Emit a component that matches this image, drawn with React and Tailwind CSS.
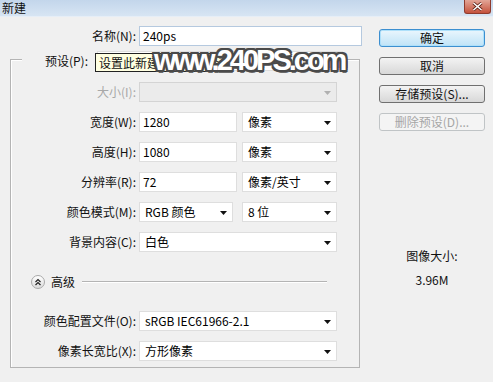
import React from "react";

const FONT = "font-['Noto_Sans_CJK_SC','Microsoft_YaHei',sans-serif]";

function Arrow({ disabled }) {
  return (
    <svg width="7" height="4" viewBox="0 0 7 4" className="absolute right-[5px] top-[8px]">
      <polygon points="0,0 7,0 3.5,4" fill={disabled ? "#b0b0b0" : "#111"} />
    </svg>
  );
}

function Select({ w, children, disabled }) {
  return (
    <div
      className={
        "relative h-[20px] border flex items-center pl-[5px] text-[12px] leading-[18px] " +
        w +
        (disabled ? " bg-[#ebebeb] border-[#d4d4d4]" : " bg-white border-[#dedede]")
      }
    >
      <span className="whitespace-nowrap">{children}</span>
      <Arrow disabled={disabled} />
    </div>
  );
}

function Input({ w, children }) {
  return (
    <div className={"h-[20px] border border-[#dedede] bg-white flex items-center pl-[3px] text-[12px] " + w}>
      {children}
    </div>
  );
}

function Row({ label, disabled, children, className, gap }) {
  return (
    <div className={"flex items-center h-[20px] " + (className || "")}>
      <div
        className={
          "w-[125px] text-right text-[12px] whitespace-nowrap " +
          (disabled ? "text-[#a8a8a8]" : "text-[#111]")
        }
      >
        {label}
      </div>
      <div className={"ml-[3px] flex " + (gap || "gap-[5px]")}>{children}</div>
    </div>
  );
}

function Btn({ children, primary, disabled }) {
  let cls =
    "h-[18px] w-[106px] rounded-[3px] border flex items-center justify-center text-[12px] leading-none ";
  if (primary)
    cls +=
      "border-[#3c8fd0] bg-gradient-to-b from-[#eaf6fd] to-[#bfe3f7] shadow-[inset_0_0_0_1px_#aee0fa] text-[#111]";
  else if (disabled) cls += "border-[#c0c4c6] bg-[#f4f4f4] text-[#a6a6a6]";
  else cls += "border-[#707070] bg-gradient-to-b from-[#f3f3f3] to-[#d8d8d8] text-[#111]";
  return <div className={cls}>{children}</div>;
}

export default function App() {
  return (
    <div className={"relative w-[493px] h-[382px] bg-[#f0f0f0] overflow-hidden flex flex-col " + FONT}>
      {/* Title bar */}
      <div className="relative h-[17px] bg-gradient-to-b from-[#c3d6eb] to-[#d7e5f3] flex items-center pl-[2px] text-[12px] text-[#111] border-b border-[#e6eef7]">
        新建
        <div className="absolute right-[2px] top-0 w-[27px] h-[14px] rounded-b-[3px] border border-[#8e3b2e] border-t-0 bg-gradient-to-b from-[#e2a597] to-[#c4513c] flex items-center justify-center">
          <svg width="11" height="9" viewBox="0 0 11 9">
            <path d="M1.5 1 L9.5 8 M9.5 1 L1.5 8" stroke="#5a1f14" strokeWidth="3" />
            <path d="M1.5 1 L9.5 8 M9.5 1 L1.5 8" stroke="#fff" strokeWidth="1.6" />
          </svg>
        </div>
      </div>

      {/* Body */}
      <div className="flex flex-row flex-1">
        {/* Left column */}
        <div className="flex flex-col w-[362px]">
          <div className="mt-[9px] flex items-center h-[20px]">
            <div className="w-[136px] text-right text-[12px] text-[#111]">名称(N):</div>
            <div className="ml-[3px] h-[20px] w-[223px] border border-[#b5c9df] bg-white flex items-center pl-[3px] text-[12px]">
              240ps
            </div>
          </div>

          {/* Group box */}
          <div className="mt-[13px] ml-[10px] w-[350px] h-[309px] border border-[#b4b4b4] shadow-[inset_1px_1px_0_#fff] flex flex-col">
            <div className="mt-[-9px] ml-[11px] w-[321px] h-[20px] bg-[#f0f0f0] flex items-center">
              <div className="w-[66px] text-right text-[12px] text-[#111]">预设(P):</div>
              <div className="ml-[9px] h-[20px] w-[246px] border border-[#dedede] bg-white"></div>
            </div>

            <Row label="大小(I):" disabled className="mt-[11px]">
              <Select w="w-[198px]" disabled></Select>
            </Row>
            <Row label="宽度(W):" className="mt-[10px]">
              <Input w="w-[98px]">1280</Input>
              <Select w="w-[95px]">像素</Select>
            </Row>
            <Row label="高度(H):" className="mt-[10px]">
              <Input w="w-[98px]">1080</Input>
              <Select w="w-[95px]">像素</Select>
            </Row>
            <Row label="分辨率(R):" className="mt-[10px]">
              <Input w="w-[98px]">72</Input>
              <Select w="w-[95px]">像素/英寸</Select>
            </Row>
            <Row label="颜色模式(M):" className="mt-[10px]" gap="gap-[9px]">
              <Select w="w-[94px]">RGB 颜色</Select>
              <Select w="w-[95px]">8 位</Select>
            </Row>
            <Row label="背景内容(C):" className="mt-[10px]">
              <Select w="w-[198px]">白色</Select>
            </Row>

            <div className="mt-[20px] h-[20px] flex items-center">
              <div className="ml-[20px] w-[14px] h-[14px] rounded-full border border-[#a9a9a9] bg-gradient-to-b from-white to-[#dcdcdc] flex items-center justify-center">
                <svg width="8" height="8" viewBox="0 0 8 8">
                  <path d="M1.5 4 L4 1.5 L6.5 4 M1.5 7 L4 4.5 L6.5 7" fill="none" stroke="#222" strokeWidth="1.2" />
                </svg>
              </div>
              <span className="ml-[6px] text-[12px] text-[#111]">高级</span>
              <div className="ml-[7px] w-[245px] h-[2px] border-t border-[#b4b4b4] border-b border-b-white"></div>
            </div>

            <Row label="颜色配置文件(O):" className="mt-[19px]">
              <Select w="w-[198px]">sRGB IEC61966-2.1</Select>
            </Row>
            <Row label="像素长宽比(X):" className="mt-[10px]">
              <Select w="w-[198px]">方形像素</Select>
            </Row>
          </div>
        </div>

        {/* Right column */}
        <div className="ml-[17px] mt-[12px] flex flex-col w-[106px]">
          <Btn primary>确定</Btn>
          <div className="mt-[10px]">
            <Btn>取消</Btn>
          </div>
          <div className="mt-[10px]">
            <Btn>存储预设(S)...</Btn>
          </div>
          <div className="mt-[10px]">
            <Btn disabled>删除预设(D)...</Btn>
          </div>
          <div className="mt-[117px] text-center text-[12px] text-[#111] leading-[16px]">图像大小:</div>
          <div className="mt-[8px] text-center text-[12px] text-[#111] leading-[16px]">3.96M</div>
        </div>
      </div>

      {/* Tooltip */}
      <div className="absolute left-[95px] top-[53px] h-[19px] border border-[#222] bg-[#ffffe1] px-[3px] text-[12px] leading-[17px] text-[#111] whitespace-nowrap">
        设置此新建文档的预设
      </div>

      {/* Watermark */}
      <div className="absolute left-[154px] top-[46px] text-[29px] leading-[28px] font-bold tracking-[-3px] text-white whitespace-nowrap font-['Liberation_Sans',Arial,sans-serif] [text-shadow:2px_0_#4a4a4a,-2px_0_#4a4a4a,0_2px_#4a4a4a,0_-2px_#4a4a4a,2px_2px_#4a4a4a,-2px_-2px_#4a4a4a,2px_-2px_#4a4a4a,-2px_2px_#4a4a4a,1px_3px_#6a6a6a]">
        www.240PS.com
      </div>
    </div>
  );
}
